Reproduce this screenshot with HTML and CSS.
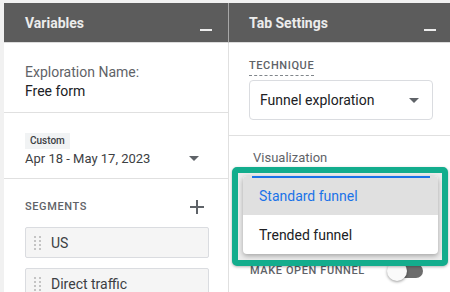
FILE: index.html
```html
<!DOCTYPE html>
<html lang="en">
<head>
  <meta charset="UTF-8">
  <title>Exploration</title>
  <link rel="stylesheet" href="styles.css">
</head>
<body>

  <div class="panels">
    <div class="panel panel-vars">
      <div class="panel-head">
        <span class="panel-title">Variables</span>
        <span class="minimize"></span>
      </div>

      <div class="section name-section">
        <div class="muted-line">Exploration Name:</div>
        <div class="value-line">Free form</div>
      </div>

      <div class="section date-section">
        <span class="chip">Custom</span>
        <div class="date-row">
          <span class="date-text">Apr 18 - May 17, 2023</span>
          <span class="caret caret-date"></span>
        </div>
      </div>

      <div class="section segments-section">
        <div class="section-row">
          <span class="caps-label">SEGMENTS</span>
          <svg class="plus" width="14" height="14" viewBox="0 0 14 14">
            <path d="M7 0v14M0 7h14" stroke="#5f6368" stroke-width="2" fill="none"/>
          </svg>
        </div>
        <div class="segment">
          <span class="handle"><i></i><i></i><i></i><i></i><i></i><i></i><i></i><i></i></span>
          <span>US</span>
        </div>
        <div class="segment">
          <span class="handle"><i></i><i></i><i></i><i></i><i></i><i></i><i></i><i></i></span>
          <span>Direct traffic</span>
        </div>
      </div>
    </div>

    <div class="panel panel-tab">
      <div class="panel-head">
        <span class="panel-title">Tab Settings</span>
        <span class="minimize"></span>
      </div>

      <div class="section technique-section">
        <span class="caps-label dashed">TECHNIQUE</span>
        <div class="select-box">
          <span>Funnel exploration</span>
          <span class="caret"></span>
        </div>
      </div>

      <div class="section viz-section">
        <div class="viz-label">Visualization</div>
        <div class="toggle-row">
          <span class="caps-label">MAKE OPEN FUNNEL</span>
          <span class="toggle"><span class="track"></span><span class="knob"></span></span>
        </div>
      </div>

      <!-- highlighted open menu -->
      <div class="callout">
        <div class="menu">
          <div class="menu-focus"></div>
          <div class="menu-item selected">Standard funnel</div>
          <div class="menu-item">Trended funnel</div>
        </div>
      </div>
    </div>
  </div>

</body>
</html>
```

FILE: styles.css
```css
html {
  box-sizing: border-box;
  background: #f1f1f1;
}

*, *:before, *:after {
  box-sizing: inherit;
}

body {
  margin: 0;
  padding: 3px 0 0 4px;
  font-family: Roboto, "Liberation Sans", sans-serif;
  color: #202124;
  overflow: hidden;
}

.panels {
  display: flex;
  height: 289px;
  overflow: hidden;
  background: #fff;
}

.panel {
  position: relative;
}

.panel-vars {
  width: 225px;
  border-right: 1px solid #e0e0e0;
}

.panel-tab {
  flex: 1;
}

.panel-head {
  height: 40px;
  display: flex;
  align-items: center;
  justify-content: space-between;
  padding: 0 16px 0 21px;
  background: #5c5c5c;
  border-bottom: 1px solid #dcdcdc;
  color: #ececec;
}

.panel-vars .panel-head {
  margin-right: -1px;
  border-right: 1px solid #a8a8a8;
}

.panel-tab .panel-head {
  padding: 0 14px 0 20px;
}

.panel-title {
  font-size: 14px;
  font-weight: 700;
  line-height: 16px;
}

.minimize {
  align-self: flex-end;
  width: 12px;
  height: 2px;
  margin-bottom: 11px;
  background: #ececec;
}

.section {
  display: flex;
  flex-direction: column;
  align-items: stretch;
  border-bottom: 1px solid #e0e0e0;
  padding: 0 19px 0 21px;
}

.name-section {
  padding-top: 20px;
  padding-bottom: 11px;
  font-size: 14px;
  line-height: 19px;
}

.muted-line {
  color: #5f6368;
}

.date-section {
  padding-top: 20px;
  padding-bottom: 10px;
}

.chip {
  align-self: flex-start;
  padding: 0 5px;
  font-size: 10px;
  line-height: 16px;
  font-weight: 500;
  color: #3c4043;
  background: #f1f3f4;
}

.date-row {
  display: flex;
  align-items: center;
  justify-content: space-between;
  margin-top: 1px;
  font-size: 13px;
  line-height: 18px;
  color: #3c4043;
}

.caret {
  width: 0;
  height: 0;
  border-left: 5px solid transparent;
  border-right: 5px solid transparent;
  border-top: 5px solid #5f6368;
}

.caret-date {
  margin: 0 10px 2px 0;
}

.segments-section {
  border-bottom: 0;
  padding-top: 21px;
}

.section-row {
  display: flex;
  align-items: center;
  justify-content: space-between;
  margin-bottom: 13px;
}

.caps-label {
  font-size: 11px;
  line-height: 14px;
  font-weight: 500;
  color: #5f6368;
  letter-spacing: 0.6px;
}

.plus {
  margin-right: 5px;
}

.segment {
  display: flex;
  align-items: center;
  gap: 8px;
  flex: none;
  height: 31px;
  margin-bottom: 10px;
  padding-left: 8px;
  background: #f5f5f5;
  border: 1px solid #dadce0;
  border-radius: 2px;
  font-size: 14px;
  color: #3c4043;
}

.handle {
  display: grid;
  grid-template-columns: 2px 2px;
  gap: 2px 3px;
  margin-right: 2px;
}

.handle i {
  width: 2px;
  height: 2px;
  background: #c4c4c4;
}

.panel-tab .section {
  padding: 0 17px 0 20px;
}

.technique-section {
  padding-top: 16px !important;
  padding-bottom: 15px !important;
}

.dashed {
  align-self: flex-start;
  padding-bottom: 2px;
  border-bottom: 1px dashed #80868b;
}

.select-box {
  display: flex;
  align-items: center;
  justify-content: space-between;
  height: 40px;
  margin-top: 4px;
  padding: 0 13px 0 10px;
  border: 1px solid #dadce0;
  border-radius: 4px;
  font-size: 14px;
}

.viz-section {
  border-bottom: 0;
  padding-top: 14px !important;
}

.viz-label {
  padding-left: 4px;
  font-size: 13px;
  line-height: 16px;
  color: #5f6368;
}

.toggle-row {
  display: flex;
  align-items: center;
  justify-content: space-between;
  height: 20px;
  margin-top: 95px;
  padding-left: 1px;
}

.toggle {
  position: relative;
  width: 36px;
  height: 20px;
  margin-right: 10px;
}

.track {
  position: absolute;
  left: 2px;
  top: 3px;
  width: 34px;
  height: 14px;
  border-radius: 7px;
  background: #6d6d6d;
}

.knob {
  position: absolute;
  left: 0;
  top: 0;
  width: 20px;
  height: 20px;
  border-radius: 50%;
  background: #fafafa;
  box-shadow: 0 1px 3px rgba(0, 0, 0, 0.4);
}

.callout {
  position: absolute;
  left: 3px;
  top: 164px;
  width: 216px;
  padding: 3px 4px 6px 5px;
  border: 6px solid #13ad8d;
  border-radius: 5px;
  background: #ececec;
  box-shadow: 0 1px 3px rgba(0, 0, 0, 0.3);
}

.menu {
  position: relative;
  height: 78px;
  background: #fff;
  border-radius: 4px;
  box-shadow: 0 2px 5px rgba(0, 0, 0, 0.3);
  overflow: hidden;
}

.menu-focus {
  position: absolute;
  left: 9px;
  right: 8px;
  top: 0;
  height: 2px;
  background: #1a73e8;
}

.menu-item {
  height: 39px;
  display: flex;
  align-items: center;
  padding-left: 16px;
  font-size: 14px;
  color: #202124;
}

.menu-item.selected {
  background: #e0e0e0;
  color: #1a73e8;
}
```
